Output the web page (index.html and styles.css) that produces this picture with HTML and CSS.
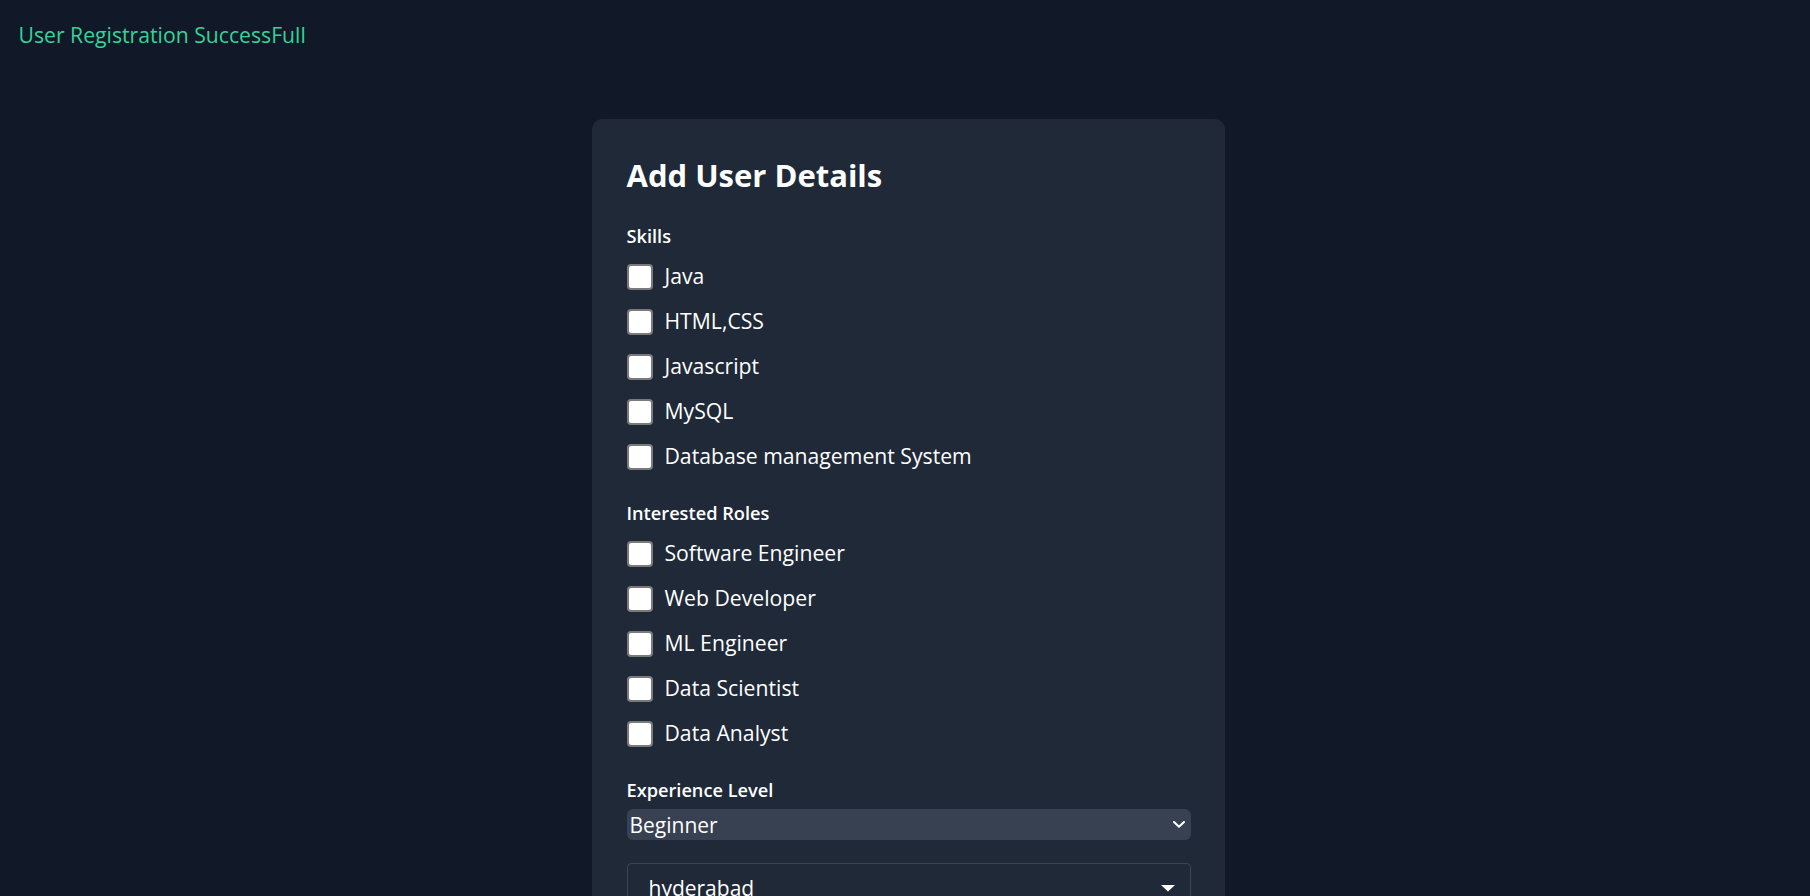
FILE: index.html
```html
<!DOCTYPE html>
<html lang="en">
<head>
<meta charset="utf-8">
<title>Add User Details</title>
<link rel="stylesheet" href="styles.css">
</head>
<body>
<p class="status">User Registration SuccessFull</p>
<main class="page">
  <form class="card">
    <h1 class="title">Add User Details</h1>

    <section class="group">
      <div class="group-label">Skills</div>
      <div class="options">
        <label class="option"><input type="checkbox" class="check"><span class="option-text">Java</span></label>
        <label class="option"><input type="checkbox" class="check"><span class="option-text">HTML,CSS</span></label>
        <label class="option"><input type="checkbox" class="check"><span class="option-text">Javascript</span></label>
        <label class="option"><input type="checkbox" class="check"><span class="option-text">MySQL</span></label>
        <label class="option"><input type="checkbox" class="check"><span class="option-text">Database management System</span></label>
      </div>
    </section>

    <section class="group">
      <div class="group-label">Interested Roles</div>
      <div class="options">
        <label class="option"><input type="checkbox" class="check"><span class="option-text">Software Engineer</span></label>
        <label class="option"><input type="checkbox" class="check"><span class="option-text">Web Developer</span></label>
        <label class="option"><input type="checkbox" class="check"><span class="option-text">ML Engineer</span></label>
        <label class="option"><input type="checkbox" class="check"><span class="option-text">Data Scientist</span></label>
        <label class="option"><input type="checkbox" class="check"><span class="option-text">Data Analyst</span></label>
      </div>
    </section>

    <div class="group-label tight">Experience Level</div>
    <div class="select">
      <span class="select-value">Beginner</span>
      <svg class="chevron" width="12" height="7" viewBox="0 0 12 7"><polyline points="1,1 6,5.8 11,1" fill="none" stroke="#ffffff" stroke-width="2" stroke-linecap="round" stroke-linejoin="round"/></svg>
    </div>

    <div class="city">
      <span class="city-value">hyderabad</span>
      <svg class="caret" width="14" height="7" viewBox="0 0 14 7"><polygon points="0,0 14,0 7,6.5" fill="#ffffff"/></svg>
    </div>

    <div class="spacer"></div>
  </form>
</main>
</body>
</html>
```
FILE: styles.css
```css
html, body {
  margin: 0;
  padding: 0;
  background: #111827;
}

body {
  font-family: "Open Sans", "Noto Sans", sans-serif;
  color: #ffffff;
}

.status {
  margin: 0;
  padding: 20.5px 18px 0 18.5px;
  font-size: 21.2px;
  line-height: 28px;
  color: #34d399;
}

.page {
  display: flex;
  justify-content: center;
  padding: 70.5px 0 40px 7px;
}

.card {
  width: 633px;
  box-sizing: border-box;
  padding: 36px 34.5px 34px;
  background: #1f2937;
  border-radius: 10px;
}

.title {
  margin: 0 0 28.6px;
  font-size: 31px;
  line-height: 40px;
  font-weight: 700;
  color: #ffffff;
}

.group {
  margin: 0 0 31px;
}

.group-label {
  margin: 0 0 16px;
  font-size: 18.2px;
  line-height: 24px;
  font-weight: 600;
  color: #ffffff;
}

.group-label.tight {
  margin-bottom: 7.3px;
}

.options {
  display: flex;
  flex-direction: column;
  gap: 19px;
}

.option {
  display: flex;
  align-items: center;
  gap: 12px;
  height: 26px;
  cursor: pointer;
}

.check {
  appearance: none;
  -webkit-appearance: none;
  margin: 0;
  width: 26px;
  height: 26px;
  flex: none;
  box-sizing: border-box;
  border: 2px solid #7a7a7a;
  border-radius: 4px;
  background: #ffffff;
}

.option-text {
  font-size: 21.2px;
  line-height: 26px;
  margin-bottom: 1px;
  color: #ffffff;
}

.select {
  display: flex;
  align-items: center;
  justify-content: space-between;
  height: 31.5px;
  box-sizing: border-box;
  padding: 0 5.7px 0 3px;
  background: #374151;
  border-radius: 6px;
}

.select-value {
  font-size: 21px;
  line-height: 26px;
  color: #ffffff;
}

.chevron {
  display: block;
}

.city {
  display: flex;
  align-items: center;
  justify-content: space-between;
  margin-top: 23px;
  height: 49.4px;
  box-sizing: border-box;
  padding: 0 15px 0 21px;
  border: 1px solid #3b4455;
  border-radius: 4px;
}

.city-value {
  font-size: 21px;
  line-height: 26px;
  color: #ffffff;
}

.caret {
  display: block;
}

.spacer {
  height: 60px;
}
```
